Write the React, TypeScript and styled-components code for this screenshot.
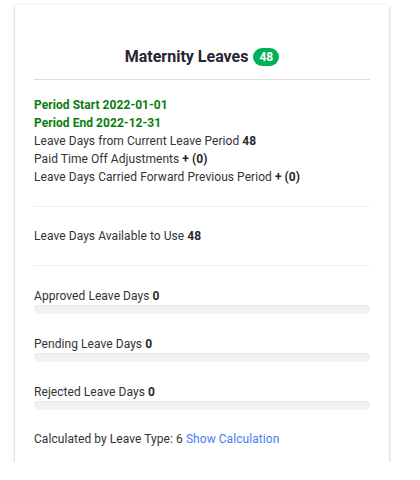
import React from "react";
import styled, { createGlobalStyle } from "styled-components";

const Global = createGlobalStyle`
  html, body { margin: 0; padding: 0; background: #ffffff; }
  body { font-family: Roboto, "Liberation Sans", Arial, sans-serif; color: #333333; }
`;

const Page = styled.div`
  padding: 5px 0 0 15px;
`;

const Card = styled.div`
  width: 374px;
  box-sizing: border-box;
  background: #ffffff;
  box-shadow: 0 1px 3px rgba(0, 0, 0, 0.22), 0 1px 2px rgba(0, 0, 0, 0.1);
  padding: 0 19px 14px 19px;
`;

const Header = styled.div`
  display: flex;
  align-items: center;
  justify-content: center;
  gap: 5px;
  padding: 42px 0 12px 0;
  border-bottom: 1px solid #dddddd;
`;

const Title = styled.h2`
  margin: 0;
  font-size: 16px;
  line-height: 20px;
  font-weight: 700;
  color: #262633;
`;

const Badge = styled.span`
  display: inline-flex;
  align-items: center;
  justify-content: center;
  height: 18px;
  padding: 0 6px;
  border-radius: 9px;
  background: #00b15a;
  color: #ffffff;
  font-size: 12px;
  font-weight: 700;
`;

const Section = styled.div`
  display: flex;
  flex-direction: column;
  padding: 16px 0 20px 0;
  border-bottom: 1px solid #eeeeee;
`;

const MidSection = styled.div`
  padding: 20px 0 20px 0;
  border-bottom: 1px solid #eeeeee;
`;

const Line = styled.div<{ $green?: boolean }>`
  font-size: 12px;
  line-height: 18px;
  letter-spacing: 0.06px;
  font-weight: ${(p) => (p.$green ? 700 : 400)};
  color: ${(p) => (p.$green ? "#0a7d10" : "#333333")};
`;

const Strong = styled.b`
  font-weight: 700;
  color: #2a2a2a;
`;

const StatGroup = styled.div`
  display: flex;
  flex-direction: column;
  gap: 22px;
  padding-top: 22px;
`;

const Stat = styled.div`
  display: flex;
  flex-direction: column;
`;

const StatLabel = styled.div`
  font-size: 12px;
  line-height: 17px;
  letter-spacing: 0.06px;
  color: #333333;
`;

const Bar = styled.div`
  height: 9px;
  border-radius: 5px;
  background: #f2f2f2;
  box-shadow: inset 0 1px 1px rgba(0, 0, 0, 0.06);
`;

const Footer = styled.div`
  margin-top: 20px;
  font-size: 12px;
  line-height: 18px;
  letter-spacing: 0.06px;
  color: #333333;
`;

const Link = styled.a`
  color: #4a7df0;
  text-decoration: none;
  cursor: pointer;
`;

export default function App() {
  const stats = [
    { label: "Approved Leave Days", value: 0 },
    { label: "Pending Leave Days", value: 0 },
    { label: "Rejected Leave Days", value: 0 },
  ];
  return (
    <>
      <Global />
      <Page>
        <Card>
          <Header>
            <Title>Maternity Leaves</Title>
            <Badge>48</Badge>
          </Header>
          <Section>
            <Line $green>Period Start 2022-01-01</Line>
            <Line $green>Period End 2022-12-31</Line>
            <Line>
              Leave Days from Current Leave Period <Strong>48</Strong>
            </Line>
            <Line>
              Paid Time Off Adjustments <Strong>+ (0)</Strong>
            </Line>
            <Line>
              Leave Days Carried Forward Previous Period <Strong>+ (0)</Strong>
            </Line>
          </Section>
          <MidSection>
            <Line>
              Leave Days Available to Use <Strong>48</Strong>
            </Line>
          </MidSection>
          <StatGroup>
            {stats.map((s) => (
              <Stat key={s.label}>
                <StatLabel>
                  {s.label} <Strong>{s.value}</Strong>
                </StatLabel>
                <Bar />
              </Stat>
            ))}
          </StatGroup>
          <Footer>
            Calculated by Leave Type: 6 <Link>Show Calculation</Link>
          </Footer>
        </Card>
      </Page>
    </>
  );
}
